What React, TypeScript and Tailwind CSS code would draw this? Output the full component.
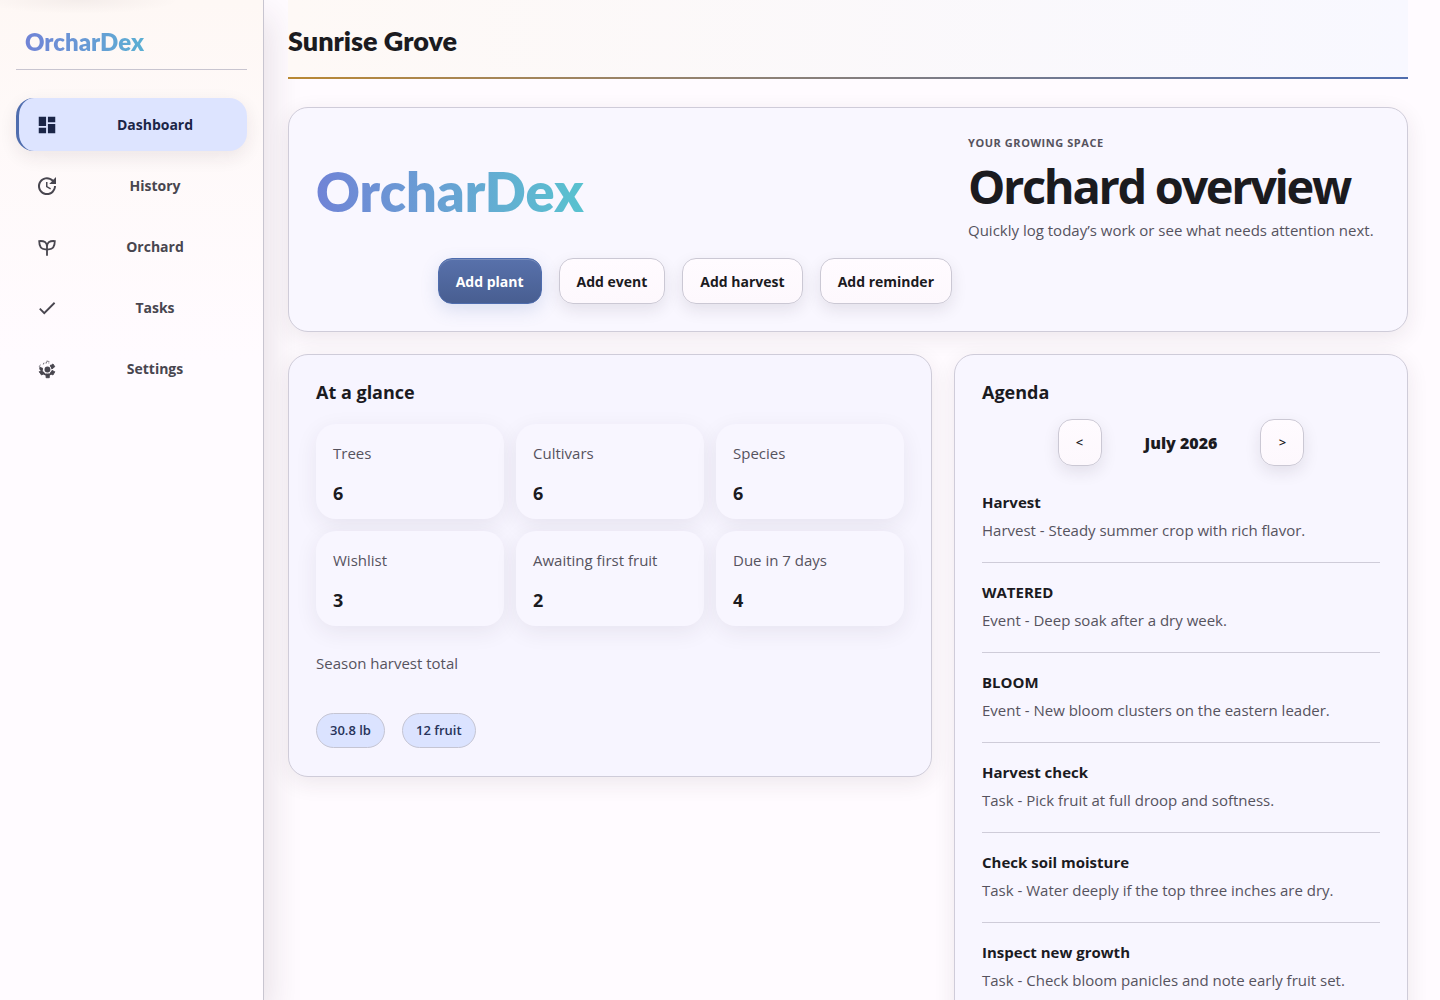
import type { ReactNode } from 'react';
import { MdCheck, MdDashboard, MdUpdate } from 'react-icons/md';

const SproutIcon = () => (
  <svg viewBox="0 0 24 24" className="size-[22px]" fill="none" stroke="currentColor" strokeWidth="2">
    <path d="M12 21.500V10M12 14.500H10C6 14.500 3.500 11.500 3.500 5.500c5.500-.5 8.500 1.500 8.500 6M12 11.500c0-4.500 3-6.500 8.500-6 0 6-2.500 9-6.500 9H12" />
  </svg>
);

const GearIcon = () => (
  <svg viewBox="0 0 24 24" className="size-[22px]" fill="none" stroke="currentColor">
    <circle cx="12.500" cy="12.500" r="3.200" fill="currentColor" stroke="none" />
    <path
      d="M5.500 10.500 3.500 9.500 5 7M8 7l1-2.500M11 6l.5-2.500H14V6"
      strokeWidth="1"
      strokeDasharray="1.600 0.800"
    />
    <path
      d="M16.500 8 18.500 6.500l2 3-2.200 1.500zM17.500 13.500l3 1.500-2 3.500-3-1.500zM3.500 15l3-1.500 2.500 3.500-3 1.500zM11 17.500h3.500v4H11zM4 10.500l3 .5v2.500L4.500 13z"
      fill="currentColor"
      strokeWidth="1"
    />
    <path d="M7.500 15.500c1 2 3 3 5 3s4-1 5-3M15.500 8c1.300.8 2 2 2.300 4" strokeWidth="2" />
  </svg>
);

const navItems: { label: string; icon: ReactNode }[] = [
  { label: 'Dashboard', icon: <MdDashboard className="size-[22px]" /> },
  { label: 'History', icon: <MdUpdate className="size-6" /> },
  { label: 'Orchard', icon: <SproutIcon /> },
  { label: 'Tasks', icon: <MdCheck className="size-[22px]" /> },
  { label: 'Settings', icon: <GearIcon /> }
];

const actions = ['Add event', 'Add harvest', 'Add reminder'];

const stats = [
  { label: 'Trees', value: 6 },
  { label: 'Cultivars', value: 6 },
  { label: 'Species', value: 6 },
  { label: 'Wishlist', value: 3 },
  { label: 'Awaiting first fruit', value: 2 },
  { label: 'Due in 7 days', value: 4 }
];

const harvestTotals = ['30.8 lb', '12 fruit'];

const agenda = [
  { title: 'Harvest', detail: 'Harvest - Steady summer crop with rich flavor.' },
  { title: 'WATERED', detail: 'Event - Deep soak after a dry week.' },
  { title: 'BLOOM', detail: 'Event - New bloom clusters on the eastern leader.' },
  { title: 'Harvest check', detail: 'Task - Pick fruit at full droop and softness.' },
  { title: 'Check soil moisture', detail: 'Task - Water deeply if the top three inches are dry.' },
  { title: 'Inspect new growth', detail: 'Task - Check bloom panicles and note early fruit set.' }
];

const card = 'rounded-[20px] border border-[#cfccd9] px-[27px] shadow-[0_6px_22px_rgba(60,30,40,0.09)]';
const lightButton =
  'rounded-[14px] border border-[#cbc8d4] bg-linear-to-b from-[#fffbff] to-[#fdf8fd] text-[#1b1b1f] shadow-[0_6px_16px_rgba(40,30,50,0.1)]';

function Sidebar() {
  return (
    <aside className="w-66 shrink-0 border-r border-[#c8c5d0] bg-[radial-gradient(ellipse_100px_14px_at_80px_0px,rgba(60,30,40,0.05),transparent),linear-gradient(to_bottom,#fef8f5,#fffbff_36%)] px-4 shadow-[6px_16px_32px_rgba(60,30,50,0.12)]">
      <div className="flex h-[70px] items-center border-b border-[#c8c5d0] px-[9px] pt-[14px]">
        <span className="bg-linear-to-r from-[#7083d6] to-[#5bafd3] bg-clip-text font-[Lato] text-[24px] font-extrabold text-transparent">
          OrcharDex
        </span>
      </div>
      <nav className="mt-7 flex flex-col gap-2">
        {navItems.map((item, index) => (
          <a
            key={item.label}
            href="#"
            className={
              index === 0
                ? 'flex h-[53px] items-center rounded-[18px] border-l-3 border-[#4f6dae] bg-[#dde4ff] pr-3 pl-4 text-[#1b2547] shadow-[0_6px_18px_rgba(60,30,40,0.09)]'
                : 'flex h-[53px] items-center rounded-[18px] border-l-3 border-transparent pr-3 pl-4 text-[#48464f]'
            }
          >
            <span className="flex w-6 shrink-0 justify-center">{item.icon}</span>
            <span className="flex-1 pl-4 text-center text-[14px] font-bold">{item.label}</span>
          </a>
        ))}
      </nav>
    </aside>
  );
}

function Overview() {
  return (
    <section className={`${card} grid grid-cols-[1fr_412px] gap-4 bg-[#f9f7ff] pt-[26px] pb-[27px]`}>
      <span className="mt-2 self-center justify-self-start bg-linear-to-r from-[#7083d6] to-[#58c2cf] bg-clip-text font-[Lato] text-[54px] leading-[64px] font-extrabold text-transparent">
        OrcharDex
      </span>
      <div>
        <p className="text-[11px] leading-[18px] font-bold tracking-wider text-[#56535e]">YOUR GROWING SPACE</p>
        <h2 className="mt-1 text-[47px] leading-[60px] font-bold tracking-tighter">Orchard overview</h2>
        <p className="mt-0.5 text-[15px] leading-6 text-[#56535e]">Quickly log today’s work or see what needs attention next.</p>
      </div>
      <div className="flex justify-end gap-[17px]">
        <button
          type="button"
          className="h-[46px] rounded-[14px] border border-[#4f6dae] bg-linear-to-b from-[#5871ab] to-[#485e91] px-[17px] text-[14px] font-bold text-white shadow-[0_6px_18px_rgba(79,109,174,0.18),inset_0_1px_0_rgba(255,255,255,0.2)]"
        >
          Add plant
        </button>
        {actions.map((action) => (
          <button key={action} type="button" className={`${lightButton} h-[46px] px-[17px] text-[14px] font-bold`}>
            {action}
          </button>
        ))}
      </div>
    </section>
  );
}

function Glance() {
  return (
    <section className={`${card} bg-[#f7f5ff] pt-[23px] pb-7`}>
      <h2 className="text-[18px] leading-7 font-bold">At a glance</h2>
      <dl className="mt-[18px] grid grid-cols-3 gap-3">
        {stats.map((stat) => (
          <div key={stat.label} className="rounded-[20px] bg-[#f8f6ff] px-[17px] pt-[17px] pb-3 shadow-[0_6px_22px_rgba(50,35,70,0.08)]">
            <dt className="text-[15px] leading-6 text-[#56535e]">{stat.label}</dt>
            <dd className="mt-[14px] text-[18px] leading-7 font-bold">{stat.value}</dd>
          </div>
        ))}
      </dl>
      <p className="mt-[25px] text-[15px] leading-6 text-[#56535e]">Season harvest total</p>
      <div className="mt-[38px] flex gap-[17px]">
        {harvestTotals.map((total) => (
          <span key={total} className="rounded-full border border-[#c5c5d3] bg-[#dbe3ff] px-[13px] py-[6px] text-[13px] leading-[21px] font-semibold text-[#27335a]">
            {total}
          </span>
        ))}
      </div>
    </section>
  );
}

function Agenda() {
  return (
    <section className={`${card} bg-[#f8f6ff] pt-[23px] pb-7`}>
      <h2 className="text-[18px] leading-7 font-bold">Agenda</h2>
      <div className="mt-[13px] flex items-center justify-center gap-[43px]">
        <button type="button" aria-label="Previous month" className={`${lightButton} h-[47px] w-11 text-[13px] font-semibold`}>
          &lt;
        </button>
        <strong className="text-[16px] font-extrabold">July 2026</strong>
        <button type="button" aria-label="Next month" className={`${lightButton} h-[47px] w-11 text-[13px] font-semibold`}>
          &gt;
        </button>
      </div>
      <ul className="mt-6 divide-y divide-[#cfccd9]">
        {agenda.map((entry) => (
          <li key={entry.title} className="pb-5 not-first:pt-[17px]">
            <h3 className="text-[15px] leading-6 font-bold">{entry.title}</h3>
            <p className="mt-1 text-[15px] leading-6 text-[#56535e]">{entry.detail}</p>
          </li>
        ))}
      </ul>
    </section>
  );
}

function App() {
  return (
    <div className="flex h-screen overflow-hidden bg-[#fffbff] font-['Open_Sans',sans-serif] text-[#1b1b1f]">
      <Sidebar />
      <main className="relative min-w-0 flex-1 overflow-y-auto pr-8 pb-8 pl-6 [scrollbar-width:none]">
        <header className="bg-linear-to-r/srgb from-[#fef9f6] to-[#f8f8ff]">
          <h1 className="flex h-[77px] items-center pt-[5px] font-[Lato] text-[27px] font-extrabold">Sunrise Grove</h1>
          <div className="h-[2px] bg-linear-to-r from-[#b98832] to-[#4f6dae]" />
        </header>
        <div className="mt-7 flex flex-col gap-[22px]">
          <Overview />
          <div className="grid grid-cols-[1fr_454px] items-start gap-[22px]">
            <Glance />
            <Agenda />
          </div>
        </div>
      </main>
    </div>
  );
}

export default App;
